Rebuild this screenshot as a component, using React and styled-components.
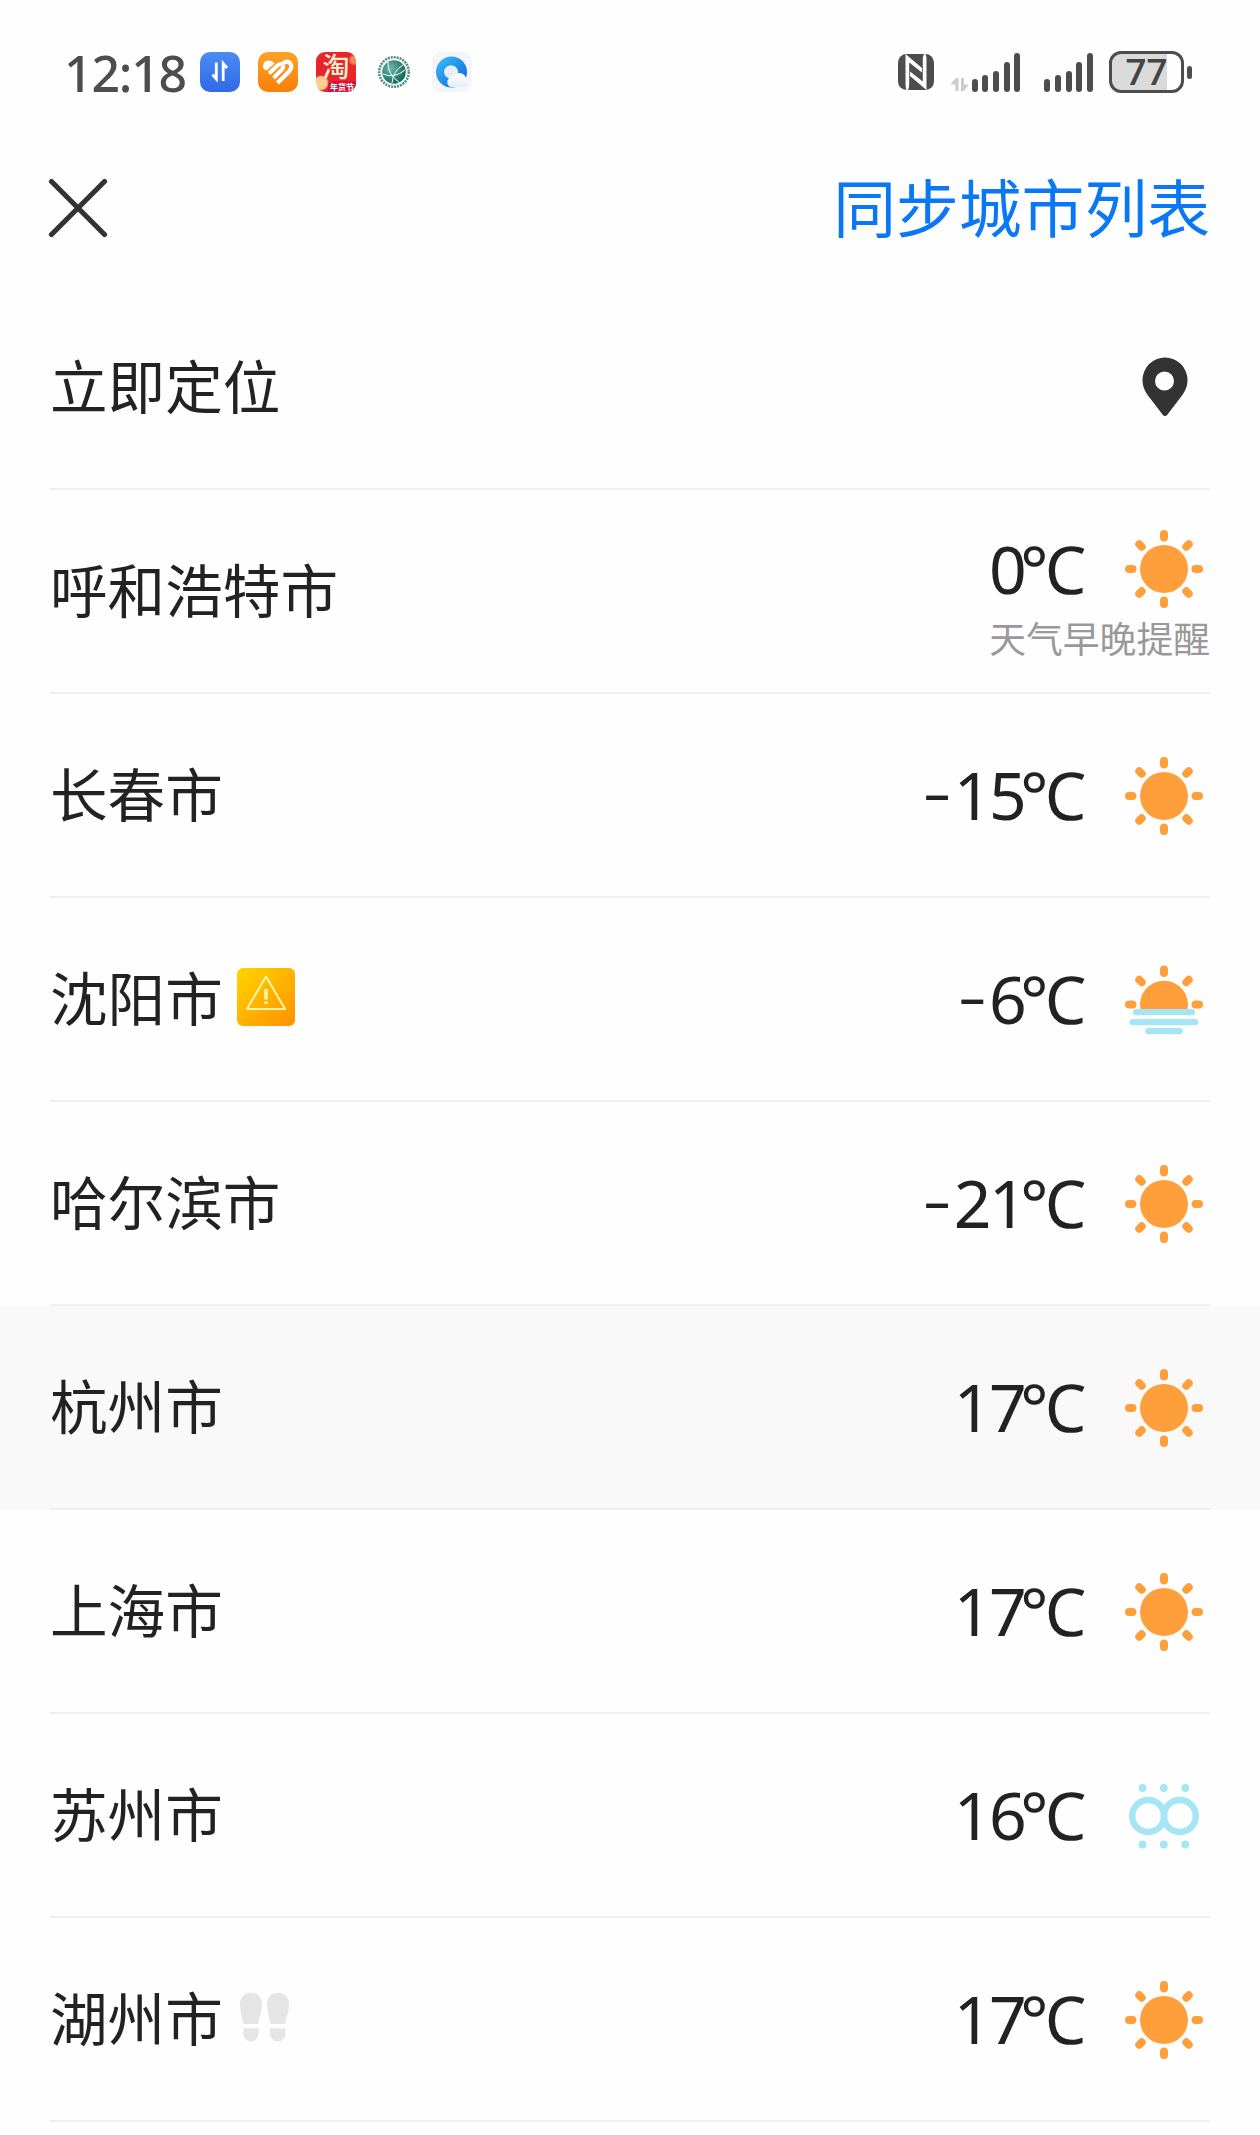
import React from 'react'
import styled, { createGlobalStyle } from 'styled-components';

const cities = [
  { name: '呼和浩特市', sign: '', temp: '0', weather: 'sun', note: '天气早晚提醒' },
  { name: '长春市', sign: '-', temp: '15', weather: 'sun' },
  { name: '沈阳市', sign: '-', temp: '6', weather: 'haze', tag: 'warning' },
  { name: '哈尔滨市', sign: '-', temp: '21', weather: 'sun' },
  { name: '杭州市', sign: '', temp: '17', weather: 'sun', active: true },
  { name: '上海市', sign: '', temp: '17', weather: 'sun' },
  { name: '苏州市', sign: '', temp: '16', weather: 'smog' },
  { name: '湖州市', sign: '', temp: '17', weather: 'sun', tag: 'steps' },
]

export default function App() {
  return (
    <Page>
      <GlobalStyle />
      <StatusBar />
      <Header>
        <CloseButton aria-label="关闭"><CloseIcon /></CloseButton>
        <SyncLink>同步城市列表</SyncLink>
      </Header>
      <List>
        <Row>
          <RowInner>
            <Name>立即定位</Name>
            <PinBox><PinIcon /></PinBox>
          </RowInner>
        </Row>
        {cities.map((city) => <CityRow key={city.name} city={city} />)}
      </List>
    </Page>
  )
}

function CityRow({ city }) {
  const Weather = weatherIcons[city.weather]
  return (
    <Row $active={city.active}>
      <RowInner>
        <NameGroup>
          <Name>{city.name}</Name>
          {city.tag === 'warning' && <WarningIcon />}
          {city.tag === 'steps' && <StepsIcon />}
        </NameGroup>
        <Info $note={city.note}>
          <Forecast>
            <Temp>
              {city.sign && <Sign>{city.sign}</Sign>}
              {city.temp}
              <Unit>℃</Unit>
            </Temp>
            <Weather />
          </Forecast>
          {city.note && <Note>{city.note}</Note>}
        </Info>
      </RowInner>
    </Row>
  )
}

function StatusBar() {
  return (
    <Status>
      <StatusGroup>
        <Time>12:18</Time>
        <AppIcons>
          <TransferAppIcon />
          <HeartAppIcon />
          <TaoApp>
            <TaoChar>淘</TaoChar>
            <TaoLabel>年货节</TaoLabel>
          </TaoApp>
          <GridAppIcon />
          <CloudAppIcon />
        </AppIcons>
      </StatusGroup>
      <StatusGroup>
        <NfcIcon />
        <DataArrows />
        <Signal />
        <SignalGap />
        <Signal />
        <Battery>
          <BatteryBody>77</BatteryBody>
          <BatteryCap />
        </Battery>
      </StatusGroup>
    </Status>
  )
}

function Signal() {
  return (
    <Bars>
      {[13, 17, 21, 30, 39].map((h) => <Bar key={h} $h={h} />)}
    </Bars>
  )
}

function TransferAppIcon() {
  return (
    <svg width="40" height="40" viewBox="0 0 40 40">
      <defs>
        <linearGradient id="transfer" x1="0" y1="0" x2="0" y2="1">
          <stop offset="0" stopColor="#4a8cf3" />
          <stop offset="1" stopColor="#3268e6" />
        </linearGradient>
      </defs>
      <rect width="40" height="40" rx="10" fill="url(#transfer)" />
      <path d="M12.5 22.5l3.800 4.500V10.500M27 16l-3.800-4.500V29" fill="none" stroke="#fff" strokeWidth="2.800" />
    </svg>
  )
}

function HeartAppIcon() {
  return (
    <svg width="40" height="40" viewBox="0 0 40 40">
      <defs>
        <linearGradient id="heart" x1="0" y1="0" x2="0" y2="1">
          <stop offset="0" stopColor="#fca326" />
          <stop offset="1" stopColor="#f97f08" />
        </linearGradient>
      </defs>
      <rect width="40" height="40" rx="10" fill="url(#heart)" />
      <path d="M5 14.500Q5 8.500 10.500 8.500Q14.500 8.500 16.500 11.500L8.500 18.500Q5 17 5 14.500z" fill="#fff" />
      <path d="M11 21.500L20 13Q22.500 11 24.500 13Q26 15 24 17.500L15.500 26" fill="none" stroke="#fff" strokeWidth="4" />
      <path d="M24 12.500Q28.500 7.500 32 11Q35 15 31 19.500L19.500 31" fill="none" stroke="#fff" strokeWidth="4.200" />
    </svg>
  )
}

function GridAppIcon() {
  return (
    <svg width="40" height="40" viewBox="0 0 40 40">
      <defs>
        <radialGradient id="globe" cx=".35" cy=".35" r=".7">
          <stop offset="0" stopColor="#6fb8aa" />
          <stop offset="1" stopColor="#0c6558" />
        </radialGradient>
      </defs>
      <circle cx="20" cy="20" r="14.800" fill="none" stroke="#4f8f86" strokeWidth="2.600" strokeDasharray="2 1" />
      <circle cx="20" cy="20" r="11.800" fill="url(#globe)" />
      <path d="M9 22q11 5 22-4M14 10q-1 12 12 21M29 13Q19 19 18 31" fill="none" stroke="#fff" strokeWidth="1" />
    </svg>
  )
}

function CloudAppIcon() {
  return (
    <svg width="40" height="40" viewBox="0 0 40 40">
      <defs>
        <linearGradient id="ring" x1="0" y1="0" x2="1" y2="1">
          <stop offset="0" stopColor="#35b3f5" />
          <stop offset="1" stopColor="#146de0" />
        </linearGradient>
        <linearGradient id="cloud" x1="0" y1="0" x2="0" y2="1">
          <stop offset="0" stopColor="#fff" />
          <stop offset="1" stopColor="#e3eefa" />
        </linearGradient>
      </defs>
      <rect width="40" height="40" rx="9" fill="#f4f6f9" />
      <circle cx="19.500" cy="20" r="11" fill="#fff" stroke="url(#ring)" strokeWidth="9" />
      <circle cx="18.500" cy="20" r="6.500" fill="#e9eef4" />
      <path d="M19 35a5 5 0 0 1-.5-9.500a4.500 4.500 0 0 1 4.500-2.500a6.500 6.500 0 0 1 11 3.500a4.500 4.500 0 0 1-.5 8.500z" fill="url(#cloud)" />
    </svg>
  )
}

function NfcIcon() {
  return (
    <svg width="36" height="36" viewBox="0 0 36 36">
      <rect width="36" height="36" rx="8.500" fill="#4d4d4d" />
      <g fill="#fefefe">
        <path d="M7.500 0L24 14V18.500L11.200 8.500V30Q11.200 34 10 36H8.500Q7.500 34 7.500 30z" />
        <path d="M28.500 36L12 22V17.500L24.800 27.500V6Q24.800 2 26 0H27.500Q28.500 2 28.500 6z" />
      </g>
    </svg>
  )
}

function DataArrows() {
  return (
    <ArrowSvg width="18" height="14" viewBox="0 0 18 14">
      <path d="M0 5.500L5 0H7.500V13H4.500V6.500H0zM17 7.500L12.500 13H10V0h3v6.500h4z" fill="#cbcbcb" />
    </ArrowSvg>
  )
}

function CloseIcon() {
  return (
    <svg width="60" height="60" viewBox="0 0 60 60">
      <path d="M3.500 3.500l53 53M56.500 3.500l-53 53" stroke="#333" strokeWidth="5.200" strokeLinecap="round" />
    </svg>
  )
}

function PinIcon() {
  return (
    <svg width="46" height="60" viewBox="0 0 46 60">
      <path fillRule="evenodd" fill="#333" d="M23 .5A22.500 22.500 0 0 0 .5 23c0 8 3.500 13 7 17.500L20.500 57.500q2.500 3 5 0L38.500 40.500c3.500-4.500 7-9.500 7-17.500A22.500 22.500 0 0 0 23 .5zM22.500 14.500a9.500 9.500 0 1 1 0 19a9.500 9.500 0 1 1 0-19z" />
    </svg>
  )
}

function Ray({ angle, cy = 39 }) {
  return <rect x="35" y={cy - 39} width="8" height="11.500" rx="4" fill="#ff9f3c" transform={`rotate(${angle} 39 ${cy})`} />
}

function SunIcon() {
  return (
    <svg width="78" height="78" viewBox="0 0 78 78">
      <circle cx="39" cy="39" r="24" fill="#ff9f3c" />
      {[0, 45, 90, 135, 180, 225, 270, 315].map((a) => <Ray key={a} angle={a} />)}
    </svg>
  )
}

function HazeIcon() {
  return (
    <svg width="78" height="78" viewBox="0 0 78 78">
      <path d="M15.400 48A24 24 0 1 1 62.600 48z" fill="#ff9f3c" />
      {[-90, -45, 0, 45, 90].map((a) => <Ray key={a} angle={a} cy={43.5} />)}
      <g fill="#a5e5f5">
        <rect x="8" y="48" width="62" height="6.300" rx="3.150" />
        <rect x="4.700" y="58" width="68.600" height="6.300" rx="3.150" />
        <rect x="20.300" y="67" width="37.400" height="6.300" rx="3.150" />
      </g>
    </svg>
  )
}

function SmogIcon() {
  return (
    <svg width="78" height="78" viewBox="0 0 78 78">
      <g fill="none" stroke="#a5e5f5" strokeWidth="6.500">
        <circle cx="23.200" cy="39" r="16" />
        <circle cx="54.800" cy="39" r="16" />
      </g>
      {[17.5, 38.8, 60.3].map((x) => (
        <g key={x} fill="#a5e5f5">
          <circle cx={x} cy="11" r="3.900" />
          <circle cx={x} cy="67.500" r="3.900" />
        </g>
      ))}
    </svg>
  )
}

const weatherIcons = { sun: SunIcon, haze: HazeIcon, smog: SmogIcon }

function WarningIcon() {
  return (
    <TagSvg width="58" height="58" viewBox="0 0 58 58">
      <defs>
        <linearGradient id="warn" x1="0" y1="0" x2="1" y2="1">
          <stop offset="0" stopColor="#ffd500" />
          <stop offset="1" stopColor="#ff9100" />
        </linearGradient>
      </defs>
      <rect width="58" height="58" rx="6" fill="url(#warn)" />
      <path d="M29 8.500L48 41H10z" fill="none" stroke="#fff3a8" strokeWidth="2" strokeLinejoin="round" />
      <path d="M29 21v10.500M29 33.500v2.500" stroke="#fff3a8" strokeWidth="3.600" />
    </TagSvg>
  )
}

function StepsIcon() {
  return (
    <TagSvg width="56" height="50" viewBox="0 0 56 50">
      <g fill="#e5e5e5">
        <path d="M14 .7C6.500 .7 3 6 3 13c0 7 2.500 12 3.300 19H21.300C22 25 25 20 25 13C25 6 21.500 .7 14 .7zM6.500 36.300H21.500V41C21.500 46 18.500 49.300 14 49.300S6.500 46 6.500 41z" />
        <path d="M41 .7C33.500 .7 30 6 30 13c0 7 2.500 12 3.300 19H48.300C49 25 52 20 52 13C52 6 48.500 .7 41 .7zM33 36.300H48.500V41C48.500 46 45.500 49.300 41 49.300S33 46 33 41z" />
      </g>
    </TagSvg>
  )
}

const GlobalStyle = createGlobalStyle`
  * {
    box-sizing: border-box;
  }
  body {
    margin: 0;
    background: #fefefe;
    font-family: Roboto, "Noto Sans CJK SC", sans-serif;
    color: #222;
  }
  svg {
    display: block;
    flex-shrink: 0;
  }
`;

const Page = styled.div`
  width: 1260px;
  height: 2135px;
  overflow: hidden;
`;

const Status = styled.div`
  display: flex;
  justify-content: space-between;
  align-items: center;
  height: 144px;
  padding: 0 68px 0 64px;
`;

const StatusGroup = styled.div`
  display: flex;
  align-items: center;
`;

const Time = styled.span`
  width: 136px;
  padding-top: 2px;
  font-family: "Noto Sans", sans-serif;
  font-size: 50px;
  font-weight: 500;
  letter-spacing: -1.2px;
  line-height: 60px;
  color: #4d4d4d;
`;

const AppIcons = styled.div`
  display: flex;
  gap: 18px;
`;

const TaoApp = styled.div`
  position: relative;
  width: 40px;
  height: 40px;
  border-radius: 9px;
  text-align: center;
  font-family: "Noto Sans CJK SC", sans-serif;
  background: radial-gradient(circle at 5px 31px, #fbcf94 0 6px, transparent 8px),
    radial-gradient(circle at 38px 8px, #f58a5a 0 3px, transparent 6px), #e8252b;
`;

const TaoChar = styled.span`
  display: block;
  font-size: 27px;
  line-height: 28px;
  font-weight: 500;
  color: #fff1cf;
`;

const TaoLabel = styled.span`
  position: absolute;
  right: 0;
  bottom: 0;
  width: 28px;
  font-size: 8px;
  line-height: 11px;
  font-weight: 700;
  white-space: nowrap;
  color: #fff;
  background: #d3123a;
  border-radius: 5px 0 9px 0;
`;

const ArrowSvg = styled.svg`
  margin: 26px 3px 0 17px;
`;

const Bars = styled.div`
  display: flex;
  align-items: flex-end;
  gap: 4.7px;
  height: 39px;
`;

const Bar = styled.i`
  width: 6px;
  height: ${(props) => props.$h}px;
  border-radius: 3px;
  background: #4d4d4d;
`;

const SignalGap = styled.span`
  width: 24px;
`;

const Battery = styled.div`
  display: flex;
  align-items: center;
  gap: 3px;
  margin-left: 16px;
`;

const BatteryBody = styled.div`
  width: 75px;
  height: 42px;
  border: 3px solid #4d4d4d;
  border-radius: 12px;
  background: linear-gradient(to right, #dadada 55px, #fefefe 55px);
  font-size: 37px;
  line-height: 38px;
  font-weight: 500;
  text-align: center;
  color: #444;
`;

const BatteryCap = styled.i`
  width: 5px;
  height: 13px;
  border-radius: 3px;
  background: #4d4d4d;
`;

const Header = styled.header`
  display: flex;
  justify-content: space-between;
  align-items: center;
  height: 127px;
  margin-bottom: 15px;
  padding: 0 50px 0 48px;
`;

const CloseButton = styled.button`
  padding: 0;
  border: 0;
  background: none;
`;

const SyncLink = styled.span`
  padding-top: 6px;
  font-size: 62.8px;
  line-height: 80px;
  color: #0a78f5;
`;

const List = styled.div`
  display: flex;
  flex-direction: column;
`;

const Row = styled.div`
  height: 204px;
  flex-shrink: 0;
  padding: 0 50px;
  background: ${(props) => (props.$active ? '#f9f9f9' : 'transparent')};
`;

const RowInner = styled.div`
  display: flex;
  justify-content: space-between;
  align-items: center;
  height: 204px;
  border-bottom: 2px solid #efefef;
`;

const NameGroup = styled.div`
  display: flex;
  align-items: center;
`;

const Name = styled.span`
  padding-top: 6px;
  font-size: 57.6px;
  line-height: 80px;
`;

const TagSvg = styled.svg`
  margin: 0 0 4px 14px;
`;

const PinBox = styled.div`
  padding-right: 22px;
`;

const Info = styled.div`
  display: flex;
  flex-direction: column;
  align-items: flex-end;
  padding-top: ${(props) => (props.$note ? 9 : 1)}px;
`;

const Forecast = styled.div`
  display: flex;
  align-items: center;
  gap: 39px;
  padding-right: 7px;
`;

const Temp = styled.span`
  display: flex;
  align-items: baseline;
  margin-bottom: 3px;
  font-family: "Noto Sans", "Noto Sans CJK SC", sans-serif;
  font-size: 66px;
  letter-spacing: -2.5px;
  line-height: 78px;
`;

const Sign = styled.span`
  margin-right: 3px;
  font-family: Inter, sans-serif;
  font-size: 72px;
  font-weight: 300;
`;

const Unit = styled.span`
  margin-left: -4px;
  letter-spacing: 0;
`;

const Note = styled.span`
  margin-top: 9px;
  font-size: 36.8px;
  line-height: 44px;
  color: #999;
`;
